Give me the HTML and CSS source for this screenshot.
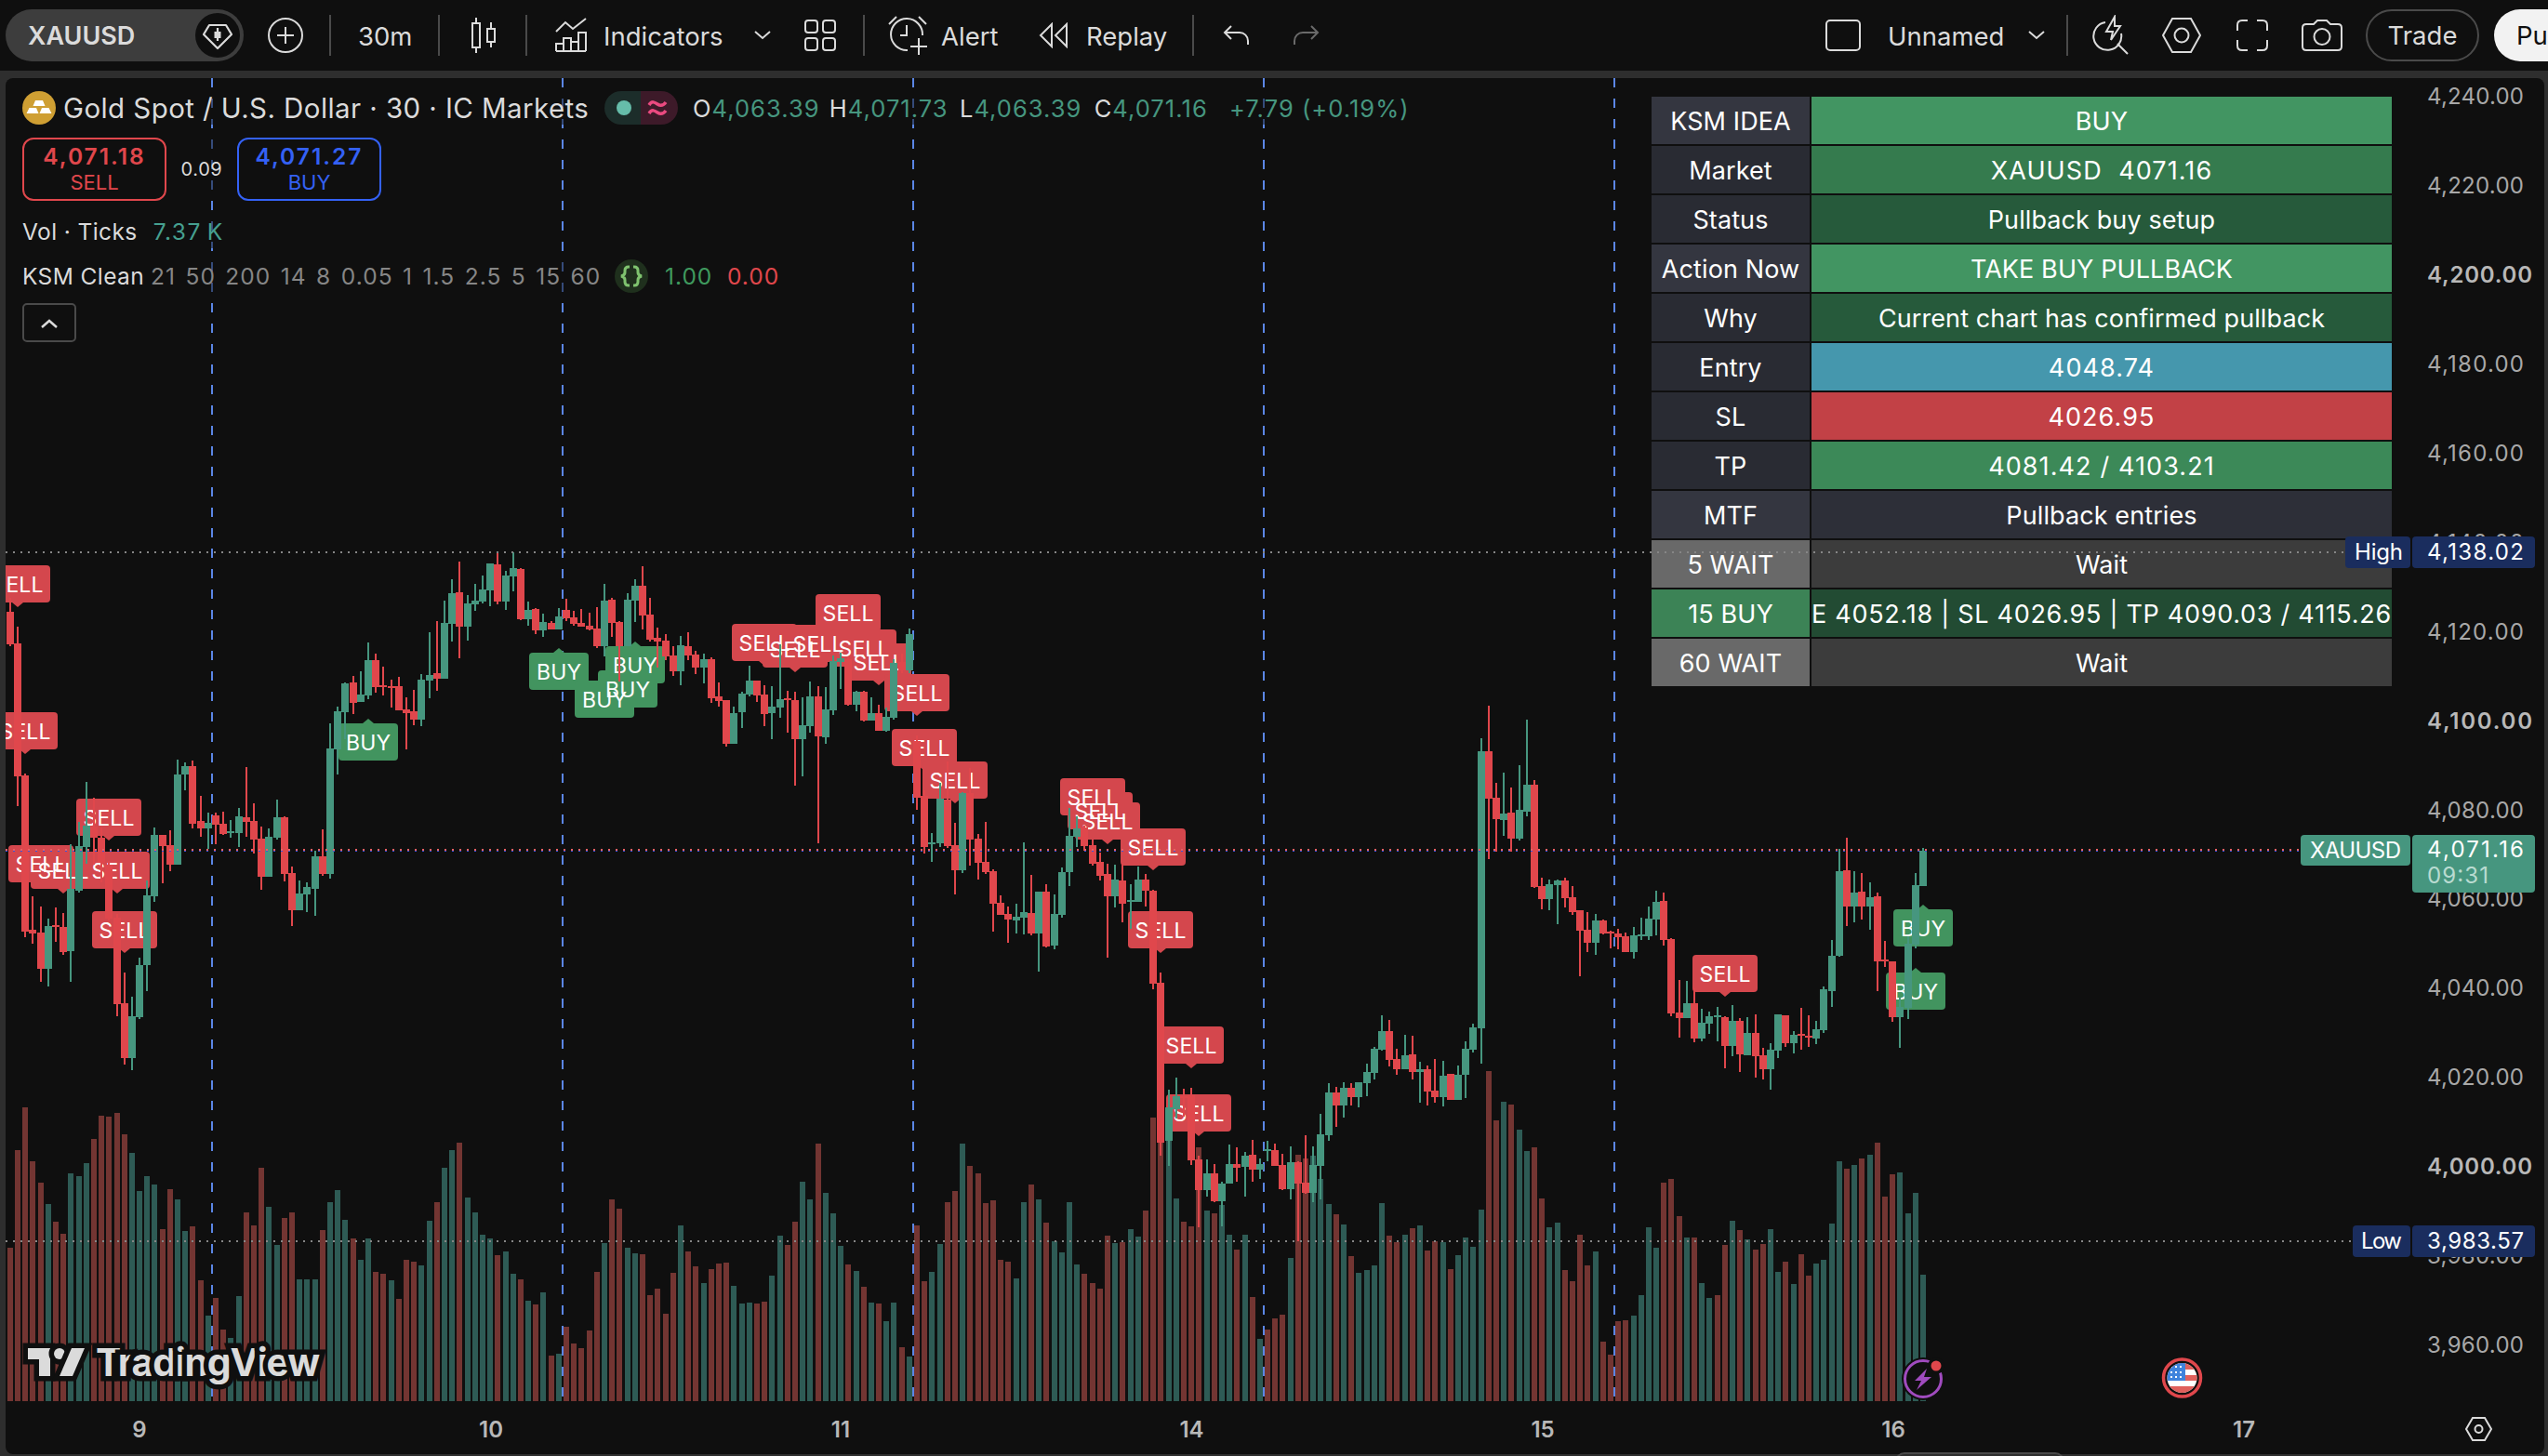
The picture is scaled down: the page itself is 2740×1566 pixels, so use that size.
FILE: index.html
```html
<!DOCTYPE html>
<html lang="en">
<head>
    <meta charset="UTF-8">
    <meta name="viewport" content="width=device-width, initial-scale=1.0">
    <title>XAUUSD 4,071.16</title>
    <link rel="stylesheet" href="styles.css">
</head>
<body>
    <header class="toolbar">
        <div class="symbol">
            <span>XAUUSD</span>
            <svg class="symbol-badge" width="48" height="48" viewBox="0 0 48 48"><circle class="badge-bg" cx="24" cy="24" r="24"/><path d="M15 13h18l6 10-15 15L9 23z"/><path d="M24 16v14"/><path class="solid" d="M20.500 20h7v7h-7z"/></svg>
        </div>
        <svg class="icon add" width="38" height="38" viewBox="0 0 38 38"><circle cx="19" cy="19" r="18"/><path d="M19 10v18M10 19h18"/></svg>
        <i class="sep s1"></i>
        <span class="tool interval">30m</span>
        <i class="sep s2"></i>
        <svg class="icon candles" width="28" height="40" viewBox="0 0 28 40"><path d="M2 7h8v26H2zM6 1v6M6 33v6M18 13h8v14h-8zM22 6v7M22 27v6"/></svg>
        <i class="sep s3"></i>
        <svg class="icon ind" width="36" height="38" viewBox="0 0 36 38"><path d="M2 15L12 5l8 7L34 1M2 36V28h8v8M10 36V22h8v14M18 26h8v10M26 36V16h8v20M2 36h32"/></svg>
        <span class="tool ind-text">Indicators</span>
        <svg class="icon chev" width="18" height="10" viewBox="0 0 18 10"><path d="M1 1l8 7 8-7"/></svg>
        <svg class="icon grid" width="34" height="34" viewBox="0 0 34 34"><rect x="1" y="1" width="13" height="13" rx="3"/><rect x="20" y="1" width="13" height="13" rx="3"/><rect x="1" y="20" width="13" height="13" rx="3"/><rect x="20" y="20" width="13" height="13" rx="3"/></svg>
        <i class="sep s4"></i>
        <svg class="icon alarm" width="44" height="44" viewBox="0 0 44 44"><path d="M38 22a17 17 0 1 0-16 16M2 10l8-8M34 2l8 8M21 11v11h-7M34 25v18M25 34h18"/></svg>
        <span class="tool alert-text">Alert</span>
        <svg class="icon rewind" width="32" height="28" viewBox="0 0 32 28"><path d="M14 2v24L2 14zM30 2v24L18 14z"/></svg>
        <span class="tool replay-text">Replay</span>
        <i class="sep s5"></i>
        <svg class="icon undo" width="28" height="22" viewBox="0 0 28 22"><path d="M9 1L2 8l7 7M2 8h16c5 0 9 4 9 9v4"/></svg>
        <svg class="icon redo" width="28" height="22" viewBox="0 0 28 22"><path d="M19 1l7 7-7 7M26 8H10c-5 0-9 4-9 9v4"/></svg>
        <svg class="icon layout" width="40" height="36" viewBox="0 0 40 36"><rect x="2" y="2" width="36" height="32" rx="4"/></svg>
        <span class="tool unnamed">Unnamed</span>
        <svg class="icon chev2" width="18" height="10" viewBox="0 0 18 10"><path d="M1 1l8 7 8-7"/></svg>
        <i class="sep s6"></i>
        <svg class="icon quick" width="40" height="44" viewBox="0 0 40 44"><path d="M14 8a15 15 0 1 0 17 12M27 31l11 11M24 2L15 18h7l-2 9 10-15h-6z"/></svg>
        <svg class="icon hex" width="42" height="38" viewBox="0 0 42 38"><path d="M11 1h20l10 18-10 18H11L1 19z"/><circle cx="21" cy="19" r="7.500"/></svg>
        <svg class="icon full" width="34" height="34" viewBox="0 0 34 34"><path d="M1 12V6q0-5 5-5h6M22 1h6q5 0 5 5v6M33 22v6q0 5-5 5h-6M12 33H6q-5 0-5-5v-6"/></svg>
        <svg class="icon camera" width="44" height="36" viewBox="0 0 44 36"><path d="M5 6h8l4-4h10l4 4h8q4 0 4 4v20q0 4-4 4H5q-4 0-4-4V10q0-4 4-4z"/><circle cx="22" cy="19.500" r="8.500"/></svg>
        <button class="trade">Trade</button>
        <button class="publish">Publish</button>
    </header>

    <main class="chart">
        <svg id="plot" class="plot" viewBox="6 84 2730 1480"></svg>

        <section class="legend">
            <div class="title-row">
                <svg width="36" height="36" viewBox="0 0 36 36"><circle cx="18" cy="18" r="18" fill="#cf9f33"/><path fill="#fff" d="M14 10h8l2.500 6h-13zM7.500 18h7.500l2.500 6h-13zM21 18h7.500l3 6h-13z"/></svg>
                <h1>Gold Spot / U.S. Dollar · 30 · IC Markets</h1>
                <svg class="status" width="79" height="36" viewBox="0 0 79 36"><path fill="#1c2d2a" d="M18 0h21v36H18a18 18 0 0 1 0-36z"/><path fill="#3d1a29" d="M39 0h22a18 18 0 0 1 0 36H39z"/><circle cx="21" cy="18" r="8" fill="#66bdaa"/><path class="wave" d="M48 15c3-5 6-3 9-1s6 2 9-2M48 24c3-5 6-3 9-1s6 2 9-2"/></svg>
                <p class="ohlc"><b>O</b>4,063.39 <b>H</b>4,071.73 <b>L</b>4,063.39 <b>C</b>4,071.16 <span>+7.79 (+0.19%)</span></p>
            </div>
            <div class="order-row">
                <button class="order sell"><strong>4,071.18</strong>SELL</button>
                <span class="spread">0.09</span>
                <button class="order buy"><strong>4,071.27</strong>BUY</button>
            </div>
            <div class="study vol">Vol · Ticks <span class="vol-value">7.37&#8201;K</span></div>
            <div class="study ksm">
                <span class="ksm-name">KSM Clean</span>
                <span class="params">21 50 200 14 8 0.05 1 1.5 2.5 5 15 60</span>
                <svg width="36" height="36" viewBox="0 0 36 36"><circle cx="18" cy="18" r="18" fill="#1f301d"/><path class="brace" d="M16 8h-1q-4 0-4 4v2q0 3-4 4 4 1 4 4v2q0 4 4 4h1M20 8h1q4 0 4 4v2q0 3 4 4-4 1-4 4v2q0 4-4 4h-1"/></svg>
                <span class="up">1.00</span>
                <span class="down">0.00</span>
            </div>
            <button class="collapse"><svg width="18" height="11" viewBox="0 0 18 11"><path d="M1 10l8-7 8 7"/></svg></button>
        </section>

        <section class="idea">
            <div class="head">KSM IDEA</div><div class="green">BUY</div>
            <div class="key">Market</div><div class="green-mid num">XAUUSD&nbsp; 4071.16</div>
            <div class="key">Status</div><div class="green-dark">Pullback buy setup</div>
            <div class="head">Action Now</div><div class="green">TAKE BUY PULLBACK</div>
            <div class="key">Why</div><div class="green-dark">Current chart has confirmed pullback</div>
            <div class="key">Entry</div><div class="blue num">4048.74</div>
            <div class="key">SL</div><div class="red num">4026.95</div>
            <div class="key">TP</div><div class="green-tp num">4081.42 / 4103.21</div>
            <div class="head">MTF</div><div class="slate">Pullback entries</div>
            <div class="wait-key">5 WAIT</div><div class="wait">Wait</div>
            <div class="buy-key">15 BUY</div><div class="green-deep mixed">E 4052.18 | SL 4026.95 | TP 4090.03 / 4115.26</div>
            <div class="wait-key">60 WAIT</div><div class="wait">Wait</div>
        </section>

        <svg id="marks" class="plot marks" viewBox="6 84 2730 1480"></svg>
    </main>
    <div class="drawer"></div>

    <script src="chart.js"></script>
</body>
</html>
```
FILE: styles.css
```css
* { box-sizing: border-box; }
body { margin: 0; width: 2740px; height: 1566px; overflow: hidden; position: relative; background: #2e2e2e; color: #dbdbdb; font-family: Inter, "Liberation Sans", sans-serif; }
h1, p { margin: 0; font-weight: 400; }
button { font-family: inherit; padding: 0; }
svg { display: block; flex: none; }

/* top bar */
.toolbar { display: flex; align-items: center; height: 76px; background: #0f0f0f; overflow: hidden; }
.toolbar > * { flex: none; }
.symbol { display: flex; align-items: center; justify-content: space-between; width: 256px; height: 56px; margin-left: 6px; padding: 0 4px 0 24px; border-radius: 28px; background: #3d3d3d; font-size: 27px; font-weight: 600; }
.symbol-badge { fill: none; stroke: #dbdbdb; stroke-width: 2.2; stroke-linejoin: round; }
.badge-bg { fill: #0f0f0f; stroke: none; }
.solid { fill: #dbdbdb; stroke: none; }
.icon { fill: none; stroke: #dbdbdb; stroke-width: 2; }
.sep { width: 2px; height: 44px; background: #4a4a4a; }
.tool { font-size: 27.5px; white-space: nowrap; padding-top: 2px; text-indent: -1px; }
.add { margin-left: 26px; }
.s1 { margin-left: 28px; }
.interval { margin-left: 30px; width: 57px; }
.s2 { margin-left: 28px; }
.candles { margin-left: 33px; }
.s3 { margin-left: 31px; }
.ind { margin-left: 29px; }
.ind-text { margin-left: 18px; width: 126px; }
.chev { margin-left: 35px; }
.grid { margin-left: 36px; }
.s4 { margin-left: 29px; }
.alarm { margin-left: 24px; }
.alert-text { margin-left: 15px; width: 59px; }
.rewind { margin-left: 45px; }
.replay-text { margin-left: 20px; width: 84px; }
.s5 { margin-left: 29px; }
.undo { margin-left: 31px; }
.redo { margin-left: 48px; stroke: #6a6a6a; }
.layout { margin-left: 543px; }
.unnamed { margin-left: 29px; width: 122px; }
.chev2 { margin-left: 28px; }
.s6 { margin-left: 23px; }
.quick { margin-left: 26px; }
.hex { margin-left: 35px; }
.full { margin-left: 38px; }
.camera { margin-left: 36px; }
.trade { width: 122px; height: 56px; margin-left: 25px; border: 2px solid #4a4a4a; border-radius: 28px; background: none; color: #dbdbdb; font-size: 27.5px; }
.publish { width: 150px; height: 56px; margin-left: 16px; padding-left: 24px; border: 0; border-radius: 28px; background: #f2f2f2; color: #0f0f0f; font-size: 27.5px; text-align: left; }

/* chart area */
.chart { position: relative; width: 2730px; height: 1480px; margin: 8px 4px 0 6px; border-radius: 8px; background: #0f0f0f; overflow: hidden; }
.plot { position: absolute; left: 0; top: 0; width: 2730px; height: 1480px; }
.plot text { font-size: 24px; }
.drawer { position: absolute; left: 2038px; top: 1562px; width: 182px; height: 20px; border: 2px solid #4a4a4a; border-radius: 14px; background: #2e2e2e; }

.candle-up { fill: #46967f; }
.candle-down { fill: #e0474c; }
.vol-up { fill: #2e5b55; }
.vol-down { fill: #733532; }
.day-line { stroke: #5b86e5; stroke-width: 2; stroke-dasharray: 10 12; }
.dots { stroke-width: 2; stroke-dasharray: 2 6; }
.dots-grey { stroke: #868686; }
.dots-red { stroke: #e86064; }
.dots-blue { stroke: #3a55d8; stroke-width: 1; }
.label-sell { fill: #d4474d; }
.label-buy { fill: #42945f; }
.plot .label-text { fill: #fff; font-size: 23px; text-anchor: middle; }
.tick { fill: #a8a8a8; }
.tick-major { fill: #b8b8b8; font-weight: 600; }
.day { fill: #b8b8b8; font-weight: 600; text-anchor: middle; }
.tag-navy { fill: #1a2d5e; }
.tag-green { fill: #46967f; }
.tag-text { fill: #fff; }
.tag-time { fill: #b9dbd1; }
.plot .brand-text { font-size: 41px; font-weight: 700; }
.brand { fill: #dbdbdb; stroke: #0f0f0f; stroke-width: 11px; stroke-linejoin: miter; paint-order: stroke; }
.line-icon { fill: none; stroke: #dbdbdb; stroke-width: 2; }

/* legend */
.legend { position: absolute; left: 18px; top: 8px; display: flex; flex-direction: column; align-items: flex-start; }
.title-row { display: flex; align-items: center; height: 36px; margin-top: 6px; background: rgba(15, 15, 15, 0.5); }
.title-row h1 { width: 563px; margin-left: 8px; font-size: 29.5px; letter-spacing: 0.42px; white-space: nowrap; }
.status { margin-left: 19px; }
.wave { fill: none; stroke: #ea4a80; stroke-width: 3.5; }
.ohlc { margin-left: 16px; font-size: 25.5px; letter-spacing: 1.05px; color: #46967f; white-space: nowrap; }
.ohlc b { font-weight: 400; color: #dbdbdb; margin-left: 2px; }
.ohlc b:first-child { margin-left: 0; }
.ohlc b:nth-of-type(3) { margin-left: 4px; }
.ohlc b:nth-of-type(4) { margin-left: 5px; }
.ohlc span { margin-left: 15px; }
.order-row { display: flex; align-items: center; height: 68px; margin-top: 14px; background: rgba(15, 15, 15, 0.5); }
.order { display: flex; flex-direction: column; align-items: center; justify-content: center; width: 155px; height: 68px; border: 2.5px solid; border-radius: 12px; background: #0f0f0f; font-size: 22px; line-height: 28px; }
.order strong { font-size: 24.5px; font-weight: 600; line-height: 27px; letter-spacing: 2px; }
.sell { color: #e0474c; }
.buy { color: #3461f5; }
.spread { width: 76px; text-align: center; font-size: 20px; letter-spacing: 0.6px; }
.study { display: flex; align-items: center; height: 36px; background: rgba(15, 15, 15, 0.5); font-size: 24.5px; letter-spacing: 0.4px; white-space: nowrap; }
.vol { margin-top: 15px; }
.vol-value { margin-left: 17px; color: #46a090; letter-spacing: 1.5px; }
.ksm { margin-top: 12px; }
.ksm-name { width: 138px; }
.params { width: 499px; color: #868686; letter-spacing: 1.05px; word-spacing: 2.5px; }
.brace { fill: none; stroke: #7fc36f; stroke-width: 3; }
.up { margin-left: 18px; width: 67px; color: #3f9a5e; letter-spacing: 1px; }
.down { color: #e0474c; letter-spacing: 1px; }
.collapse { display: flex; align-items: center; justify-content: center; width: 58px; height: 42px; margin-top: 11px; border: 2px solid #4a4a4a; border-radius: 5px; background: #0f0f0f; }
.collapse svg { fill: none; stroke: #dbdbdb; stroke-width: 2.5; }

/* idea table */
.idea { position: absolute; left: 1770px; top: 20px; display: grid; grid-template-columns: 170px 624px; grid-auto-rows: 51px; gap: 2px; color: #fff; font-size: 27px; letter-spacing: 0.1px; }
.idea div { display: flex; align-items: center; justify-content: center; padding-top: 2px; white-space: nowrap; }
.idea .num { letter-spacing: 1.1px; }
.idea .mixed { letter-spacing: 0.72px; }
.head { background: #343640; }
.key { background: #292b33; }
.green { background: #429562; }
.green-mid { background: #357b4e; }
.green-dark { background: #265a3b; }
.green-tp { background: #3c8958; }
.green-deep { background: #224b33; }
.blue { background: #4597ad; }
.red { background: #c24146; }
.slate { background: #2d2f38; }
.wait-key { background: #696969; }
.wait { background: #3c3c3c; }
.buy-key { background: #3c8356; }
```
FILE: chart.js
```js
// Each block holds consecutive candles: [up/down, high, body top, body bottom, low]
// in block units; y = top + value / scale.
const blocks = [
  { top: 560, scale: 2.529, bars: `
d 210 248 336 341|d 288 334 695 776|d 688 693 1118 1133|d 1022 1113 1123 1151|d 1050 1120 1219 1254|u 1082 1103 1219 1267
d 1052 1100 1105 1146|d 1067 1105 1173 1181|u 880 1001 1171 1254|u 819 885 1007 1012|u 711 829 888 934|d 754 832 862 935
d 835 862 930 985|d 925 935 1082 1088|d 1070 1080 1315 1348|d 1229 1313 1462 1479|u 1295 1348 1462 1495|u 1189 1209 1351 1356
u 979 1019 1209 1280|u 835 855 1022 1037|d 855 855 885 986|d 842 883 936 953|u 650 690 936 936|u 658 668 690 733
d 652 668 824 837|d 749 817 837 860|u 794 822 837 893|d 794 802 827 880|d 792 824 852 855|u 814 845 850 862
u 781 804 850 888|d 670 807 819 860|d 769 817 867 905|d 832 865 969 1004|u 837 860 969 969|u 759 807 862 867
d 804 807 961 981|d 941 959 1060 1103|u 979 1014 1060 1060|u 984 996 1017 1065|u 898 913 1001 1075|d 840 913 961 966
u 551 620 961 974|u 506 518 622 690|u 440 443 521 595|d 422 440 496 526|u 410 473 493 493|u 331 379 475 486
d 362 379 453 468|d 397 448 453 475|d 432 450 455 508|d 425 450 516 516|d 481 513 524 622|d 460 518 541 556
u 417 432 541 559|u 303 420 435 483|d 273 415 430 463|u 217 278 430 430|u 159 197 281 329|d 111 195 288 374` },
  { top: 560, scale: 3, bars: `
u 240 267 342 387|u 204 258 270 291|u 177 222 261 267|u 138 138 225 276|d 104 141 261 270|u 162 177 261 288
u 102 153 180 228|d 153 156 318 321|u 261 288 318 339|d 282 285 354 366|u 300 327 354 375|d 324 330 351 351
u 282 309 351 351|d 252 288 315 324|d 291 312 333 339|d 285 330 342 342|d 297 339 351 354|d 279 348 405 411
u 204 258 405 438|d 249 255 330 375|d 324 327 405 519|u 234 255 405 405|u 189 210 258 327|d 147 210 306 351
d 249 303 384 390|d 345 378 390 474|d 366 387 438 450|d 405 435 486 501|u 372 402 486 531|d 360 405 435 450
d 420 432 474 495|u 429 447 474 525|d 441 447 573 588|d 522 567 582 600|d 579 579 720 729|u 600 621 720 720
u 552 558 618 669|u 468 516 561 567|d 516 516 564 585|d 531 561 624 663|u 534 600 621 705|u 399 576 603 636
d 549 573 579 684|d 552 579 705 855|u 570 660 705 825|u 519 567 663 684|d 534 567 696 1041|u 537 609 699 720
u 435 453 612 627|u 426 444 456 543|d 440 446 594 597|u 549 552 594 615|d 549 552 645 648|u 570 621 645 645
d 594 621 678 678|u 603 633 678 681` },
  { top: 600, scale: 2.178, bars: `
u 237 246 375 379|d 225 243 264 270|u 166 179 264 270|d 415 430 562 590|d 545 558 677 693|u 645 666 671 712
u 527 564 669 677|d 478 566 675 679|d 621 673 732 788|u 549 551 732 738|d 493 551 660 721|d 647 658 714 754
d 618 712 736 740|d 730 734 810 875|d 791 808 836 836|d 817 834 847 902|u 810 841 849 880|u 666 830 843 882
d 743 832 880 884|u 782 782 880 969|d 764 782 910 912|u 788 834 908 917|u 725 736 836 843|u 586 651 736 769
u 605 634 653 677|d 628 632 675 686|d 660 673 716 721|d 690 712 745 756|d 716 740 793 936|u 719 754 793 819
d 714 756 810 854|u 764 801 806 869|u 723 754 806 806|d 740 754 780 817|d 777 780 997 1010|d 971 995 1370 1400
u 1246 1287 1365 1424|u 1217 1261 1291 1313|d 1244 1262 1266 1310|d 1241 1258 1411 1422|d 1400 1409 1481 1568|u 1409 1442 1481 1496
d 1420 1442 1507 1509|u 1461 1466 1507 1566|u 1374 1420 1466 1466|d 1381 1420 1429 1461|u 1392 1400 1426 1496|d 1363 1398 1433 1461
u 1407 1420 1433 1455|u 1365 1385 1389 1413|d 1372 1387 1424 1424|d 1396 1422 1479 1481|u 1379 1416 1479 1503|d 1413 1416 1466 1600
d 1352 1463 1487 1490|u 1379 1422 1487 1509|u 1302 1350 1424 1503|u 1230 1252 1352 1365|d 1239 1252 1283 1333` },
  { top: 720, scale: 2.8, bars: `
u 1243 1260 1313 1350|d 1246 1260 1288 1313|u 1243 1243 1288 1319|u 1187 1212 1246 1285|u 1137 1142 1215 1235|u 1042 1089 1145 1148
d 1056 1089 1176 1196|d 1142 1173 1204 1221|u 1100 1162 1204 1204|d 1103 1159 1212 1235|u 1182 1204 1212 1305|d 1193 1204 1271 1313
d 1173 1268 1288 1305|u 1179 1224 1288 1316|d 1218 1218 1296 1296|u 1193 1221 1296 1296|u 1120 1142 1221 1291|u 1067 1078 1145 1154
u 207 246 1081 1187|d 109 246 389 571|d 342 386 451 549|u 311 434 454 501|d 356 431 510 549|u 288 423 510 515
u 151 347 428 442|d 333 347 655 658|d 627 652 692 722|u 633 647 692 725|u 633 636 650 767|d 627 636 689 717
d 652 686 731 739|d 725 725 787 924|d 731 784 823 851|u 736 756 823 860|d 753 756 795 798|d 787 790 795 840
d 781 795 806 843|d 792 804 851 851|u 776 801 851 871|u 748 798 803 815|u 714 750 804 815|u 666 700 753 801
d 672 697 815 832|d 809 812 1036 1044|d 935 1033 1050 1109|u 938 1005 1050 1050|d 960 1005 1112 1123|u 1022 1064 1112 1120
u 1030 1044 1067 1098|u 1016 1042 1047 1120|d 1044 1047 1134 1201|u 1011 1058 1134 1165|d 1050 1058 1159 1212|u 1047 1095 1162 1162
d 1039 1095 1165 1229|d 1140 1162 1204 1235` },
  { top: 860, scale: 3, bars: `
u 786 807 870 936|u 693 693 810 834|d 696 696 786 798|u 747 759 786 819|d 672 756 762 807|d 696 762 768 798
u 714 741 771 789|u 603 612 744 753|u 453 504 618 669|u 159 231 504 507|d 123 228 345 408|u 231 300 345 396
d 237 297 345 387|u 267 315 345 420|d 300 312 522 618|d 456 516 522 540|d 522 522 702 717|u 640 669 702 801
u 440 465 672 708|u 237 276 468 480|u 156 165 279 279` }
];

// Volume bar tops, thirds of a pixel below y = 1120
const volume = [
  666, 351, 213, 387, 456, 525, 582, 621, 426, 435, 393, 315, 240, 243, 231, 300, 360, 483, 435, 462,
  606, 477, 510, 612, 597, 771, 885, 828, 930, 957, 822, 552, 594, 408, 534, 657, 570, 552, 768, 768,
  768, 609, 519, 480, 576, 636, 705, 636, 744, 750, 771, 831, 705, 711, 723, 579, 519, 408, 351, 327,
  504, 552, 624, 636, 690, 678, 750, 768, 837, 849, 810, 1014, 1008, 921, 975, 990, 933, 744, 651, 510,
  540, 666, 684, 687, 819, 798, 879, 747, 594, 678, 726, 780, 735, 717, 714, 789, 846, 843, 846, 840,
  756, 627, 657, 582, 453, 510, 330, 489, 555, 660, 720, 741, 792, 843, 846, 903, 843, 987, 1017, 594,
  774, 744, 654, 519, 483, 330, 402, 426, 522, 513, 705, 711, 765, 519, 462, 510, 585, 645, 681, 519,
  720, 750, 780, 798, 627, 651, 648, 606, 630, 546, 246, 300, 300, 507, 582, 597, 342, 546, 555, 528,
  624, 672, 624, 825, 960, 930, 894, 882, 699, 366, 378, 369, 444, 525, 558, 591, 693, 747, 738, 723,
  522, 627, 648, 624, 603, 594, 675, 645, 648, 735, 690, 633, 663, 543, 96, 255, 195, 204, 285, 354,
  342, 507, 600, 585, 738, 774, 624, 723, 678, 969, 1011, 903, 900, 885, 819, 600, 666, 456, 444, 564,
  633, 633, 780, 828, 819, 657, 579, 609, 639, 672, 654, 606, 744, 711, 783, 687, 756, 717, 705, 588,
  387, 411, 399, 378, 366, 327, 501, 429, 423, 555, 489, 753
];
// dojis whose volume bar has the opposite colour
const flipped = [50, 165, 224];

// [bar index, box top]
const sells = [
  [1, 608], [2, 766], [4, 909], [7, 916], [13, 859], [14, 916], [15, 980],
  [99, 671], [103, 678], [106, 672], [110, 639], [112, 677], [114, 692], [119, 725], [120, 784], [124, 819],
  [142, 837], [143, 852], [144, 863], [150, 891], [151, 980], [155, 1104], [156, 1177], [225, 1027]
];
const buys = [[47, 778], [72, 702], [78, 732], [81, 721], [82, 695], [250, 1046], [251, 978]];

const barX = i => Math.floor(11.26 + 8.196 * i);
const rect = (x, y, w, h, cls, rx) => `<rect class="${cls}" x="${x}" y="${y}" width="${w}" height="${h}"${rx ? ` rx="${rx}"` : ''}/>`;
const text = (x, y, s, cls, len) => `<text class="${cls}" x="${x}" y="${y}"${len ? ` textLength="${len}"` : ''}>${s}</text>`;

// Candles
const candles = [];
blocks.forEach(block => {
  block.bars.trim().split(/[|\n]/).forEach(row => {
    const [dir, ...v] = row.split(' ');
    candles.push([dir, ...v.map(n => Math.round(block.top + n / block.scale))]);
  });
});

let back = '';
volume.forEach((v, i) => {
  let up = candles[i][0] === 'u';
  if (flipped.includes(i)) up = !up;
  const y = 1120 + v / 3;
  back += rect(barX(i) - 3, y, 6, 1507 - y, up ? 'vol-up' : 'vol-down');
});
[228, 605, 982, 1359, 1736].forEach(x => {
  back += `<line class="day-line" x1="${x}" y1="84" x2="${x}" y2="1507"/>`;
});

// Signal labels
let labelText = '';
sells.forEach(([i, y]) => {
  const x = barX(i);
  back += rect(x - 35, y, 70, 40, 'label-sell', 4) + `<path class="label-sell" d="M${x - 6} ${y + 40}h12l-6 5z"/>`;
  labelText += text(x, y + 28.5, 'SELL', 'label-text', 55);
});
buys.forEach(([i, y]) => {
  const x = barX(i);
  back += rect(x - 32, y, 64, 40, 'label-buy', 4) + `<path class="label-buy" d="M${x - 6} ${y}h12l-6-5z"/>`;
  labelText += text(x, y + 28.5, 'BUY', 'label-text', 48);
});
back += labelText;

candles.forEach(([dir, high, top, bottom, low], i) => {
  const cls = dir === 'u' ? 'candle-up' : 'candle-down';
  const x = barX(i);
  back += rect(x - 1, high, 2, low - high, cls) + rect(x - 4, top, 8, Math.max(2, bottom - top), cls);
});

// Axes
for (let p = 4240; p >= 3960; p -= 20) {
  const y = 103.7 + (4240 - p) * 4.7957 + 8.5;
  const label = p.toLocaleString('en-US') + '.00';
  back += p % 100 ? text(2610, y, label, 'tick', 104) : text(2610, y, label, 'tick-major', 113);
}
[[9, 150], [10, 528], [11, 904], [14, 1281.5], [15, 1659], [16, 2036], [17, 2413]].forEach(([d, x]) => {
  back += text(x, 1546, d, 'day');
});
back += `<g class="line-icon"><path d="M2659 1525h13l7 12-7 12h-13l-7-12z"/><circle cx="2665.500" cy="1537" r="4"/></g>`;

// Watermark
back += `<path class="brand" d="M30 1450h24v30H42v-18H30z"/><circle class="brand" cx="64" cy="1456" r="6"/><path class="brand" d="M77 1450h14l-13 30H64z"/>`;
back += text(103, 1480, 'TradingView', 'brand brand-text', 241);

// Events on the time scale
back += `<circle cx="2068" cy="1483" r="23" fill="#0f0f0f"/><circle cx="2068" cy="1483" r="19.500" fill="none" stroke="#a04bbf" stroke-width="3"/>
<path fill="#a04bbf" d="M2072 1472l-13 13h7l-5 10 16-14h-8z"/><circle cx="2082" cy="1469" r="9" fill="#0f0f0f"/><circle cx="2082" cy="1469" r="5.500" fill="#e0474c"/>
<clipPath id="flag"><circle cx="2346.500" cy="1482" r="16"/></clipPath><circle cx="2346.500" cy="1482" r="20" fill="#0f0f0f" stroke="#e0474c" stroke-width="3.500"/>
<g clip-path="url(#flag)"><rect x="2330" y="1465" width="34" height="34" fill="#fff"/><path fill="#e0605c" d="M2330 1465h34v8h-34zM2330 1479h34v6h-34zM2330 1491h34v8h-34z"/><rect x="2330" y="1465" width="20" height="20" fill="#3f83dc"/>
<path stroke="#fff" stroke-width="2" stroke-dasharray="2 3" d="M2334 1470h14M2334 1476h14M2334 1481h14"/></g>`;
document.getElementById('plot').innerHTML = back;

// Price lines and tags stay above the table
const dots = (y, x2, cls) => `<line class="dots ${cls}" x1="6" y1="${y}" x2="${x2}" y2="${y}"/>`;
let front = dots(594, 2522, 'dots-grey') + dots(1335, 2530, 'dots-grey') + dots(915.5, 2474, 'dots-blue') + dots(914, 2474, 'dots-red');
front += rect(2522, 577, 70, 34, 'tag-navy', 4) + text(2532, 602, 'High', 'tag-text', 52) + rect(2594, 577, 132, 34, 'tag-navy', 4) + text(2610, 602, '4,138.02', 'tag-text', 104);
front += rect(2530, 1318, 62, 34, 'tag-navy', 4) + text(2539, 1343, 'Low', 'tag-text', 44) + rect(2594, 1318, 132, 34, 'tag-navy', 4) + text(2610, 1343, '3,983.57', 'tag-text', 104);
front += rect(2474, 898, 118, 33, 'tag-green', 4) + text(2484, 923, 'XAUUSD', 'tag-text', 98) + rect(2594, 898, 132, 62, 'tag-green', 4) + text(2610, 922, '4,071.16', 'tag-text', 104) + text(2610, 950, '09:31', 'tag-time', 66);
document.getElementById('marks').innerHTML = front;
```
